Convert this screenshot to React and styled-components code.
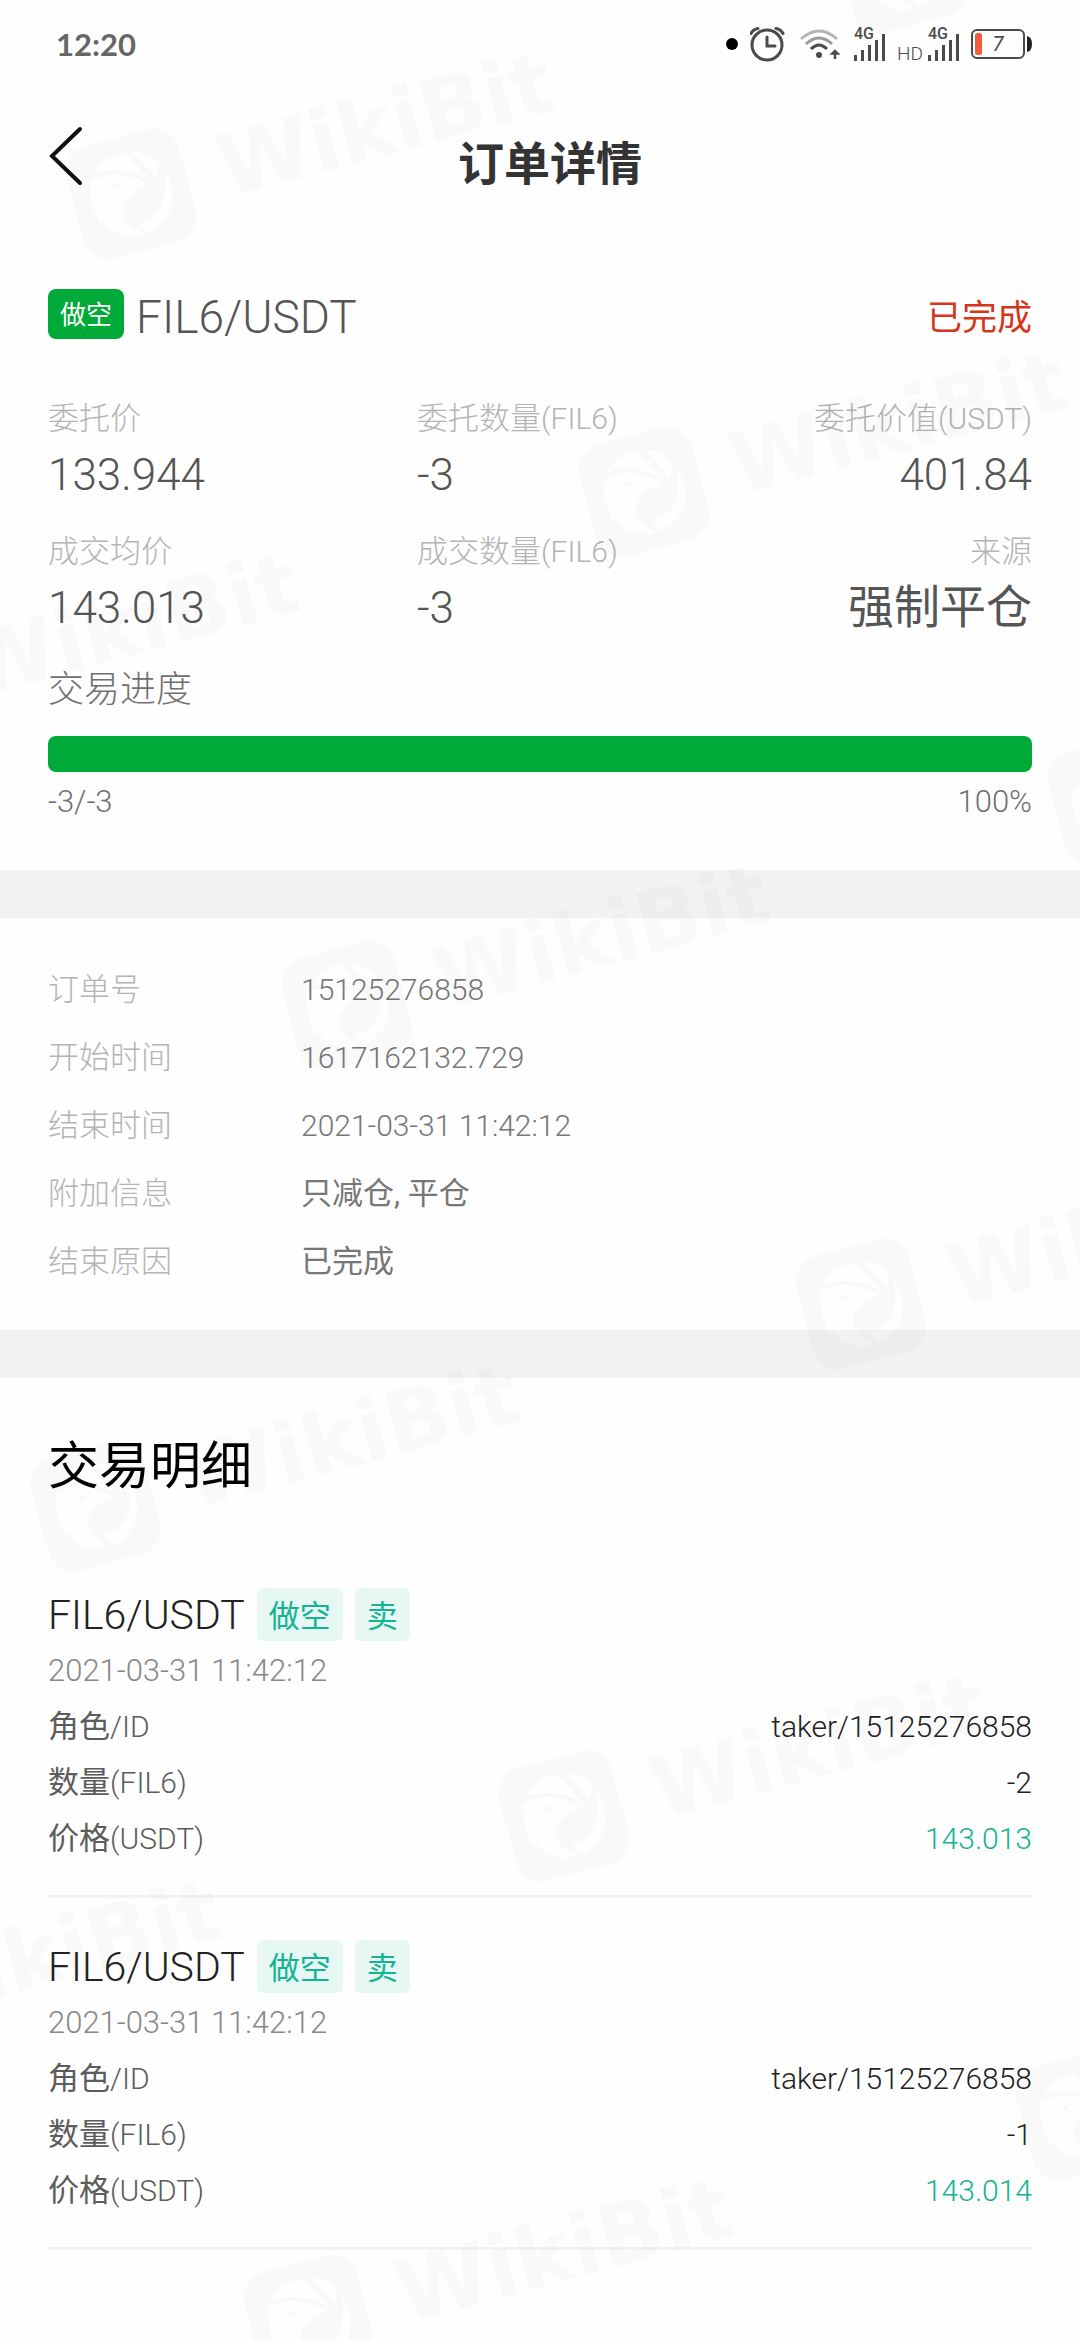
/*
 * Order detail screen of the exchange app
 */

import styled, { createGlobalStyle } from "styled-components";

const GREEN = "#00aa38";
const TEAL = "#14b392";

const GlobalStyle = createGlobalStyle`
  * {
    box-sizing: border-box;
  }

  body {
    margin: 0;
    background: #fefefe;
    color: #555;
    font-family: Roboto, "Noto Sans CJK SC", sans-serif;
    font-size: 31px;
  }

  h1, h2, h3, p, dl, dt, dd {
    margin: 0;
    font-weight: 400;
  }
`;

const Screen = styled.div`
  position: relative;
  min-height: 100vh;
  overflow: hidden;
`;

const StatusBar = styled.div`
  display: flex;
  align-items: center;
  justify-content: space-between;
  height: 88px;
  padding: 0 48px 0 56px;
  color: #4a4a4a;
`;

const Clock = styled.span`
  font-family: Lato, sans-serif;
  font-size: 31px;
  font-weight: 700;
  color: #666;
`;

const StatusIcons = styled.div`
  display: flex;
  align-items: center;
  gap: ${(props) => props.$gap}px;

  svg {
    display: block;
  }
`;

const Dot = styled.span`
  width: 12px;
  height: 12px;
  border-radius: 50%;
  background: #000;
`;

const HdLabel = styled.span`
  padding-top: 20px;
  font-size: 19px;
  font-weight: 300;
  line-height: 20px;
`;

const Header = styled.header`
  display: grid;
  grid-template-columns: 80px 1fr 60px;
  align-items: start;
  padding: 38px 48px 51px;
`;

const BackButton = styled.button`
  width: 36px;
  height: 60px;
  padding: 0;
  border: 0;
  background: none;
  cursor: pointer;

  svg {
    display: block;
  }
`;

const Title = styled.h1`
  padding-top: 12px;
  font-size: 46px;
  font-weight: 600;
  line-height: 52px;
  text-align: center;
  color: #333;
`;

const Summary = styled.section`
  padding: 48px 48px 46px;
`;

const SummaryHead = styled.div`
  display: flex;
  align-items: center;
  height: 56px;
  margin-bottom: 52px;
`;

const SideBadge = styled.span`
  align-self: flex-start;
  margin-right: 12px;
  padding: 2px 12px 0;
  border-radius: 8px;
  background: ${GREEN};
  color: #fff;
  font-size: 26px;
  line-height: 48px;
`;

const Pair = styled.h2`
  flex: 1;
  font-size: 46px;
  font-weight: 300;
`;

const Status = styled.span`
  font-size: 35px;
  line-height: 56px;
  padding-top: 4px;
  color: #d4361c;
`;

const StatGrid = styled.dl`
  display: grid;
  grid-template-columns: 3fr 2fr 3fr;
  row-gap: 23px;
`;

const Stat = styled.div`
  text-align: ${(props) => props.$align || "left"};
  white-space: nowrap;

  dt {
    line-height: 44px;
    font-weight: 300;
    color: #b4b4b4;
  }

  dd {
    font-size: 46px;
    line-height: 66px;
  }
`;

// Roboto runs wider than the Chinese face, so Latin runs are set smaller
const Latin = styled.span`
  font-size: ${(props) => (props.$large ? 44 : 30)}px;
  font-weight: 300;
  line-height: 1;
`;

const ProgressTitle = styled.p`
  margin: 24px 0 20px;
  font-size: 36px;
  font-weight: 300;
  line-height: 52px;
  color: #707070;
`;

const ProgressTrack = styled.div`
  height: 36px;
  border-radius: 8px;
  background: #f2f2f2;
  overflow: hidden;
`;

const ProgressFill = styled.div`
  height: 100%;
  background: ${GREEN};
`;

const ProgressLegend = styled.div`
  display: flex;
  justify-content: space-between;
  margin-top: 8px;
  font-size: 31px;
  font-weight: 300;
  line-height: 44px;
  color: #707070;
`;

const Band = styled.div`
  height: 48px;
  background: #f2f2f2;
`;

const InfoList = styled.dl`
  padding: 38px 48px 34px;
`;

const InfoRow = styled.div`
  display: grid;
  grid-template-columns: 253px 1fr;
  line-height: 68px;

  dt {
    font-weight: 300;
    color: #b4b4b4;
  }

  dd {
    color: #777;
  }
`;

const Trades = styled.section`
  padding: 53px 48px 0;
`;

const TradesTitle = styled.h2`
  margin-bottom: 43px;
  font-size: 51px;
  line-height: 72px;
  color: #000;
`;

const Trade = styled.article`
  padding: 42px 0 28px;
  border-bottom: 3px solid #f2f2f2;
`;

const TradeHead = styled.div`
  display: flex;
  align-items: center;
  gap: 12px;
  margin-bottom: 2px;
`;

const TradePair = styled.h3`
  font-size: 41px;
  font-weight: 300;
  line-height: 48px;
  color: #222;
`;

const Tag = styled.span`
  padding: 5px 12px 0;
  border-radius: 6px;
  background: #e6f7f4;
  color: ${TEAL};
  line-height: 48px;
`;

const TradeTime = styled.p`
  font-size: 31px;
  font-weight: 300;
  line-height: 56px;
  color: #888;
`;

const TradeRow = styled.div`
  display: flex;
  justify-content: space-between;
  line-height: 56px;

  dt {
    color: #5c5c5c;
  }

  dd {
    color: ${(props) => (props.$highlight ? TEAL : "#222")};
  }
`;

const WatermarkLayer = styled.svg`
  position: absolute;
  inset: 0;
  width: 100%;
  height: 100%;
  pointer-events: none;
`;

const stats = [
  { label: "委托价", value: "133.944" },
  { label: "委托数量", unit: "(FIL6)", value: "-3" },
  { label: "委托价值", unit: "(USDT)", value: "401.84", align: "right" },
  { label: "成交均价", value: "143.013" },
  { label: "成交数量", unit: "(FIL6)", value: "-3" },
  { label: "来源", text: "强制平仓", align: "right" },
];

const info = [
  { label: "订单号", value: "15125276858" },
  { label: "开始时间", value: "1617162132.729" },
  { label: "结束时间", value: "2021-03-31 11:42:12" },
  { label: "附加信息", text: "只减仓, 平仓" },
  { label: "结束原因", text: "已完成" },
];

const trades = [
  { id: 1, time: "2021-03-31 11:42:12", amount: "-2", price: "143.013" },
  { id: 2, time: "2021-03-31 11:42:12", amount: "-1", price: "143.014" },
];

const marks = [
  { x: 902, y: -32, logoOnly: true },
  { x: 131, y: 194 },
  { x: 644, y: 492 },
  { x: -124, y: 695 },
  { x: 1113, y: 801, logoOnly: true },
  { x: 347, y: 1006 },
  { x: 861, y: 1304 },
  { x: 96, y: 1506 },
  { x: 564, y: 1816 },
  { x: -202, y: 2022 },
  { x: 1081, y: 2115, logoOnly: true },
  { x: 309, y: 2320 },
];

function AlarmIcon() {
  return (
    <svg width="38" height="36" viewBox="0 0 38 36" fill="none" stroke="currentColor">
      <circle cx="17" cy="19" r="15" strokeWidth="3" />
      <path d="M17 11v9h8" strokeWidth="3" strokeLinecap="round" />
      <path d="M1 7.500Q3 3.500 8 2.500M33 7.500Q31 3.500 26 2.500" strokeWidth="3" strokeLinecap="round" />
    </svg>
  );
}

function WifiIcon() {
  return (
    <svg width="42" height="32" viewBox="0 0 42 32" fill="none" strokeWidth="3">
      <path d="M1 11Q19-5 37 11" stroke="#b4b4b4" />
      <path d="M6 16Q19 4 32 16" stroke="#9a9a9a" />
      <path d="M11 21Q19 13 27 21" stroke="currentColor" />
      <circle cx="19" cy="27" r="3" fill="currentColor" />
      <path d="M35 31v-8M32.500 25.500l2.500-2.500 2.500 2.500z" stroke="currentColor" strokeWidth="2.500" />
    </svg>
  );
}

function SignalIcon() {
  return (
    <svg width="31" height="44" viewBox="0 -4 31 44" fill="currentColor">
      <text x="0" y="13" fontSize="16" fontWeight="500" fontFamily="Roboto, sans-serif">
        4G
      </text>
      <rect x="0" y="29" width="3" height="6" />
      <rect x="7" y="24" width="3" height="11" />
      <rect x="14" y="19" width="3" height="16" />
      <rect x="21" y="14" width="3" height="21" />
      <rect x="28" y="8" width="3" height="27" />
    </svg>
  );
}

function BatteryIcon() {
  return (
    <svg width="61" height="30" viewBox="0 0 61 30">
      <rect x="1" y="1" width="52" height="28" rx="5" fill="none" stroke="currentColor" strokeWidth="2" />
      <path d="M56 7q5 1 5 8t-5 8z" fill="#222" />
      <rect x="4" y="4" width="7" height="22" rx="2.500" fill="#f25c3b" />
      <text
        x="27"
        y="22"
        fontSize="21"
        fontStyle="italic"
        textAnchor="middle"
        fontFamily="Lato, sans-serif"
        fill="currentColor"
      >
        7
      </text>
    </svg>
  );
}

function Watermark() {
  return (
    <WatermarkLayer aria-hidden="true" fill="#000" opacity="0.016">
      {marks.map(({ x, y, logoOnly }) => (
        <g key={`${x},${y}`} transform={`translate(${x} ${y}) rotate(-15)`}>
          <path
            fillRule="evenodd"
            d="M-32-58H32A26 26 0 0 1 58-32V32A26 26 0 0 1 32 58H-32A26 26 0 0 1-58 32V-32A26 26 0 0 1-32-58Z
               M-36-22Q-14-30 8-14L20-4Q4-4-8 6Q-18 20-6 34L2 42A42 42 0 0 1-30 29L-34 18L-37 22Q-44 0-36-22Z
               M-31-29A42 42 0 0 1 4-42L22-8Q-2-30-31-29Z
               M10-41Q28-37 35-22L29-6Q22-26 10-41Z
               M38-16Q46 6 34 26Q22 40 6 42L0 30Q34 30 38-16Z"
          />
          <path d="M-20-12L-6-14L-12-8Z" />
          {!logoOnly && (
            <text x="92" y="28" fontSize="85" fontWeight="700" fontFamily="DejaVu Sans, sans-serif">
              WikiBit
            </text>
          )}
        </g>
      ))}
    </WatermarkLayer>
  );
}

function TradeItem({ trade }) {
  return (
    <Trade>
      <TradeHead>
        <TradePair>FIL6/USDT</TradePair>
        <Tag>做空</Tag>
        <Tag>卖</Tag>
      </TradeHead>
      <TradeTime>{trade.time}</TradeTime>
      <dl>
        <TradeRow>
          <dt>
            角色<Latin>/ID</Latin>
          </dt>
          <dd>
            <Latin>taker/15125276858</Latin>
          </dd>
        </TradeRow>
        <TradeRow>
          <dt>
            数量<Latin>(FIL6)</Latin>
          </dt>
          <dd>
            <Latin>{trade.amount}</Latin>
          </dd>
        </TradeRow>
        <TradeRow $highlight>
          <dt>
            价格<Latin>(USDT)</Latin>
          </dt>
          <dd>
            <Latin>{trade.price}</Latin>
          </dd>
        </TradeRow>
      </dl>
    </Trade>
  );
}

export default function App() {
  const progress = 100;

  return (
    <Screen>
      <GlobalStyle />

      <StatusBar>
        <Clock>12:20</Clock>
        <StatusIcons $gap={12}>
          <Dot />
          <AlarmIcon />
          <WifiIcon />
          <SignalIcon />
          <StatusIcons $gap={5}>
            <HdLabel>HD</HdLabel>
            <SignalIcon />
          </StatusIcons>
          <BatteryIcon />
        </StatusIcons>
      </StatusBar>

      <Header>
        <BackButton type="button" aria-label="返回">
          <svg width="36" height="60" viewBox="0 0 36 60" fill="none" stroke="#111" strokeWidth="4">
            <path d="M32 3L4 30L32 57" strokeLinecap="round" />
          </svg>
        </BackButton>
        <Title>订单详情</Title>
      </Header>

      <main>
        <Summary>
          <SummaryHead>
            <SideBadge>做空</SideBadge>
            <Pair>FIL6/USDT</Pair>
            <Status>已完成</Status>
          </SummaryHead>

          <StatGrid>
            {stats.map((stat) => (
              <Stat key={stat.label} $align={stat.align}>
                <dt>
                  {stat.label}
                  {stat.unit && <Latin>{stat.unit}</Latin>}
                </dt>
                <dd>{stat.text || <Latin $large>{stat.value}</Latin>}</dd>
              </Stat>
            ))}
          </StatGrid>

          <ProgressTitle id="progress-title">交易进度</ProgressTitle>
          <ProgressTrack
            role="progressbar"
            aria-labelledby="progress-title"
            aria-valuenow={progress}
          >
            <ProgressFill style={{ width: `${progress}%` }} />
          </ProgressTrack>
          <ProgressLegend>
            <span>-3/-3</span>
            <span>{progress}%</span>
          </ProgressLegend>
        </Summary>

        <Band />

        <InfoList>
          {info.map((row) => (
            <InfoRow key={row.label}>
              <dt>{row.label}</dt>
              <dd>{row.text || <Latin>{row.value}</Latin>}</dd>
            </InfoRow>
          ))}
        </InfoList>

        <Band />

        <Trades>
          <TradesTitle>交易明细</TradesTitle>
          {trades.map((trade) => (
            <TradeItem key={trade.id} trade={trade} />
          ))}
        </Trades>
      </main>

      <Watermark />
    </Screen>
  );
}
